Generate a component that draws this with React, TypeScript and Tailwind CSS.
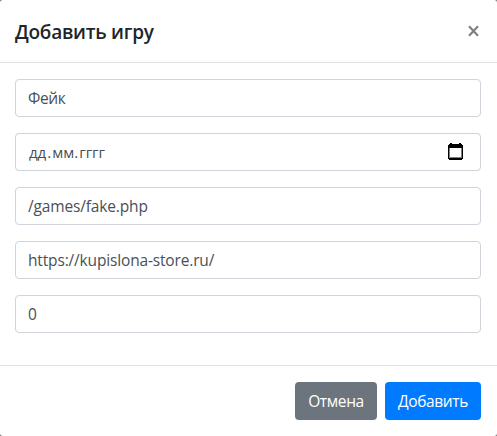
type FieldProps = {
  label: string;
  value: string;
  spacing: string;
};

function Field({ label, value, spacing }: FieldProps) {
  return (
    <input
      aria-label={label}
      defaultValue={value}
      className={`block h-[38px] w-full rounded border border-[#ced4da] bg-white px-3 text-[15.5px] text-[#495057] outline-none ${spacing}`}
    />
  );
}

function CalendarIcon() {
  return (
    <svg width="15" height="17" viewBox="0 0 15 17" shapeRendering="crispEdges" aria-hidden="true">
      <path
        fill="#000"
        fillRule="evenodd"
        d="M2 0h2v1h7V0h2v1h1v1h1v14h-1v1H1v-1H0V2h1V1h1zM1 5v10h13V5z"
      />
      <path fill="none" stroke="#000" strokeOpacity=".5" d="M1.5 5v9.5h12V5" />
    </svg>
  );
}

export default function App() {
  return (
    <div className="h-[436px] w-[497px] overflow-hidden bg-[#7f7f7f] font-['Open_Sans','Noto_Sans',sans-serif]">
      <div className="flex h-full flex-col rounded-[3px] bg-white">
        <header className="flex h-[63px] items-center justify-between border-b border-[#dee2e6] px-[15px]">
          <h5 className="pt-0.5 text-[19px] font-semibold leading-[30px] tracking-[-0.25px] text-[#212529]">Добавить игру</h5>
          <button aria-label="Закрыть" className="mr-[3px] text-[#7f7f7f]">
            <svg width="11" height="12" viewBox="0 0 11 12" aria-hidden="true">
              <path d="M1 1.2 10 10.8M10 1.2 1 10.8" stroke="currentColor" strokeWidth="2.1" />
            </svg>
          </button>
        </header>
        <main className="flex flex-1 flex-col gap-4 px-[15px] pr-4 pt-4">
          <Field label="Название" value="Фейк" spacing="tracking-[-0.4px]" />
          <div className="flex h-[38px] items-center justify-between rounded border border-[#ced4da] pl-[13px] pr-[17px] text-[15.5px] text-[#495057]">
            <span className="flex text-[15px]">
              <span>дд</span>
              <span className="px-px">.</span>
              <span>мм</span>
              <span className="pr-px">.</span>
              <span>гггг</span>
            </span>
            <span className="pb-0.5">
              <CalendarIcon />
            </span>
          </div>
          <Field label="Путь" value="/games/fake.php" spacing="tracking-[-0.15px]" />
          <Field label="Ссылка" value="https://kupislona-store.ru/" spacing="tracking-[-0.16px]" />
          <Field label="Порядок" value="0" spacing="tracking-normal" />
        </main>
        <footer className="flex h-[71px] items-start justify-end gap-2 border-t border-[#dee2e6] pr-4 pt-4 text-[15.5px] tracking-[-0.35px] text-white">
          <button className="h-[38px] w-[82px] rounded bg-[#6c757d] pt-0.5">Отмена</button>
          <button className="h-[38px] w-24 rounded bg-[#007bff] pt-0.5">Добавить</button>
        </footer>
      </div>
    </div>
  );
}
